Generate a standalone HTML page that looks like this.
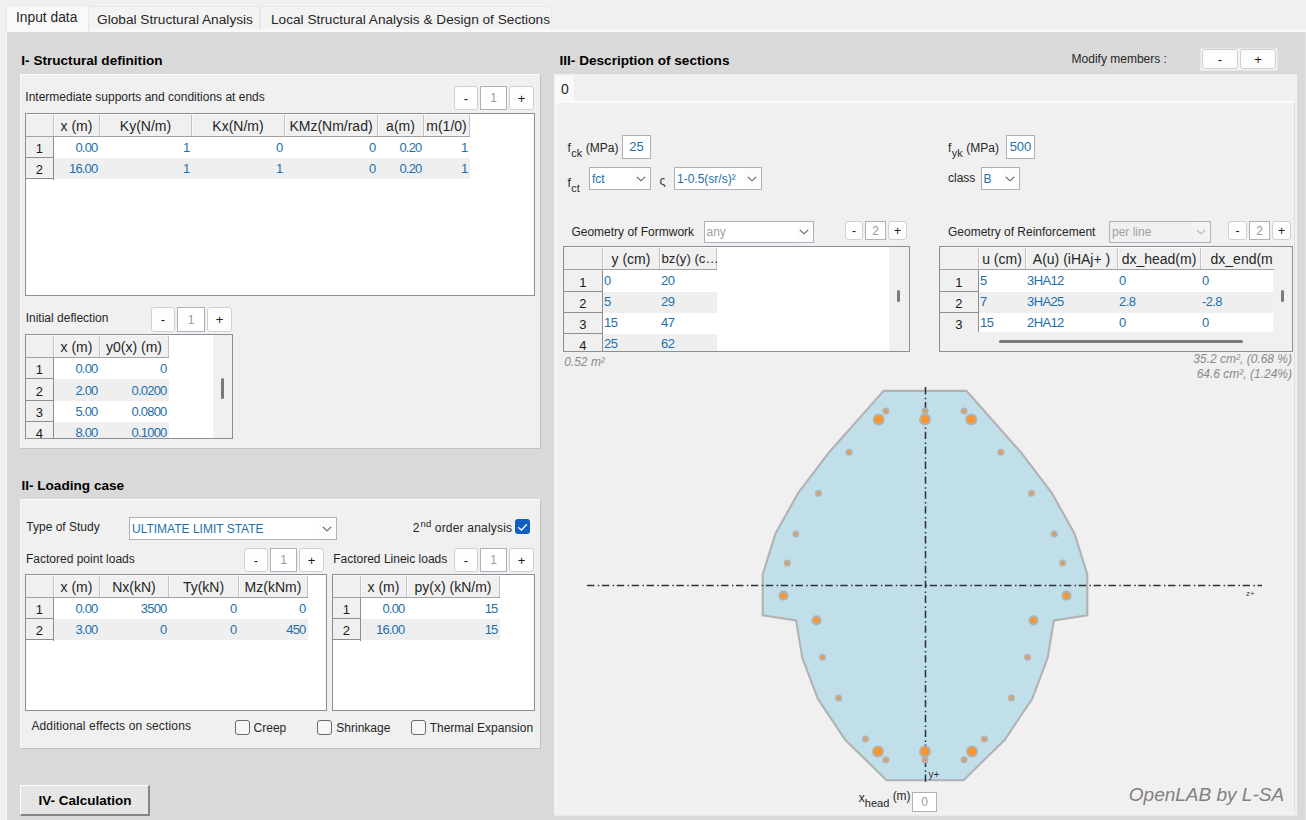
<!DOCTYPE html>
<html><head><meta charset="utf-8"><style>
html,body{margin:0;padding:0;}
body{width:1306px;height:820px;position:relative;overflow:hidden;background:#f0f0f0;font-family:"Liberation Sans",sans-serif;}
.a{position:absolute;}
.t{position:absolute;white-space:nowrap;}
svg{overflow:visible;}
</style></head><body>

<div class="a" style="left:88px;top:6px;width:172px;height:23px;background:#f3f3f3;border:1px solid #e8e8e8;border-bottom:none;box-sizing:border-box;"></div>
<div class="a" style="left:260px;top:6px;width:292px;height:23px;background:#f3f3f3;border:1px solid #e8e8e8;border-bottom:none;box-sizing:border-box;"></div>
<div class="a" style="left:6px;top:29px;width:1300px;height:3px;background:#f9f9f9;"></div>
<div class="a" style="left:6px;top:28px;width:2px;height:792px;background:#f9f9f9;"></div>
<div class="a" style="left:6px;top:5px;width:83px;height:27px;background:#f9f9f9;border:1px solid #e8e8e8;border-bottom:none;box-sizing:border-box;"></div>
<div class="t" style="left:16.00px;top:11.22px;font-size:13.8px;line-height:13.8px;color:#262626;">Input data</div>
<div class="t" style="left:97.00px;top:12.80px;font-size:13.7px;line-height:13.7px;color:#262626;">Global Structural Analysis</div>
<div class="t" style="left:271.00px;top:12.85px;font-size:13.65px;line-height:13.65px;color:#262626;">Local Structural Analysis &amp; Design of Sections</div>
<div class="a" style="left:7px;top:32px;width:1299px;height:788px;background:#d9d9d9;"></div>
<div class="a" style="left:1305px;top:32px;width:1px;height:788px;background:#e4e4e4;"></div>
<div class="t" style="left:21.30px;top:54.09px;font-size:13.6px;line-height:13.6px;color:#000;font-weight:bold;">I- Structural definition</div>
<div class="a" style="left:20px;top:74px;width:521px;height:375px;background:#f0f0f0;border-top:1px solid #fbfbfb;border-left:1px solid #fbfbfb;border-right:1px solid #c2c2c2;border-bottom:1px solid #c2c2c2;box-sizing:border-box;"></div>
<div class="t" style="left:25.30px;top:90.84px;font-size:12px;line-height:12px;color:#262626;">Intermediate supports and conditions at ends</div>
<div class="a" style="left:454px;top:86px;width:24px;height:24px;background:#fdfdfd;border:1px solid #d0d0d0;border-radius:3px;box-sizing:border-box;"></div>
<div class="t" style="left:266.00px;width:400px;text-align:center;top:91.50px;font-size:13px;line-height:13px;color:#1a1a1a;">-</div>
<div class="a" style="left:480px;top:86px;width:27px;height:24px;background:#ffffff;border:1px solid #b0b0b8;box-sizing:border-box;"></div>
<div class="t" style="left:293.50px;width:400px;text-align:center;top:92.14px;font-size:12px;line-height:12px;color:#9a9a9a;">1</div>
<div class="a" style="left:509px;top:86px;width:25px;height:24px;background:#fdfdfd;border:1px solid #d0d0d0;border-radius:3px;box-sizing:border-box;"></div>
<div class="t" style="left:321.50px;width:400px;text-align:center;top:91.50px;font-size:13px;line-height:13px;color:#1a1a1a;">+</div>
<div class="a" style="left:25px;top:113px;width:510px;height:183px;background:#ffffff;overflow:hidden;">
<div class="a" style="left:0px;top:0px;width:29px;height:23px;background:#f0f0f0;"></div>
<div class="a" style="left:29px;top:0px;width:46px;height:23px;background:#f0f0f0;"></div>
<div class="a" style="left:29px;top:1px;width:1px;height:22px;background:#fafafa;"></div>
<div class="a" style="left:74px;top:0px;width:1px;height:23px;background:#c2c2c2;"></div>
<div class="a" style="left:75px;top:0px;width:92px;height:23px;background:#f0f0f0;"></div>
<div class="a" style="left:75px;top:1px;width:1px;height:22px;background:#fafafa;"></div>
<div class="a" style="left:166px;top:0px;width:1px;height:23px;background:#c2c2c2;"></div>
<div class="a" style="left:167px;top:0px;width:93px;height:23px;background:#f0f0f0;"></div>
<div class="a" style="left:167px;top:1px;width:1px;height:22px;background:#fafafa;"></div>
<div class="a" style="left:259px;top:0px;width:1px;height:23px;background:#c2c2c2;"></div>
<div class="a" style="left:260px;top:0px;width:93px;height:23px;background:#f0f0f0;"></div>
<div class="a" style="left:260px;top:1px;width:1px;height:22px;background:#fafafa;"></div>
<div class="a" style="left:352px;top:0px;width:1px;height:23px;background:#c2c2c2;"></div>
<div class="a" style="left:353px;top:0px;width:46px;height:23px;background:#f0f0f0;"></div>
<div class="a" style="left:353px;top:1px;width:1px;height:22px;background:#fafafa;"></div>
<div class="a" style="left:398px;top:0px;width:1px;height:23px;background:#c2c2c2;"></div>
<div class="a" style="left:399px;top:0px;width:46px;height:23px;background:#f0f0f0;"></div>
<div class="a" style="left:399px;top:1px;width:1px;height:22px;background:#fafafa;"></div>
<div class="a" style="left:444px;top:0px;width:1px;height:23px;background:#c2c2c2;"></div>
<div class="a" style="left:28px;top:0px;width:1px;height:23px;background:#c2c2c2;"></div>
<div class="a" style="left:0px;top:1px;width:445px;height:1px;background:#fafafa;"></div>
<div class="a" style="left:0px;top:23px;width:445px;height:1px;background:#a3a3a3;"></div>
<div class="t" style="left:-148.50px;width:400px;text-align:center;top:5.65px;font-size:14px;line-height:14px;color:#262626;">x (m)</div>
<div class="t" style="left:-79.50px;width:400px;text-align:center;top:5.65px;font-size:14px;line-height:14px;color:#262626;">Ky(N/m)</div>
<div class="t" style="left:13.00px;width:400px;text-align:center;top:5.65px;font-size:14px;line-height:14px;color:#262626;">Kx(N/m)</div>
<div class="t" style="left:106.00px;width:400px;text-align:center;top:5.65px;font-size:14px;line-height:14px;color:#262626;">KMz(Nm/rad)</div>
<div class="t" style="left:175.50px;width:400px;text-align:center;top:5.65px;font-size:14px;line-height:14px;color:#262626;">a(m)</div>
<div class="t" style="left:221.50px;width:400px;text-align:center;top:5.65px;font-size:14px;line-height:14px;color:#262626;">m(1/0)</div>
<div class="a" style="left:29px;top:24px;width:416px;height:21px;background:#ffffff;"></div>
<div class="a" style="left:0px;top:24px;width:28px;height:21px;background:#f0f0f0;"></div>
<div class="a" style="left:28px;top:24px;width:1px;height:22px;background:#8e8e8e;"></div>
<div class="a" style="left:0px;top:44px;width:29px;height:1px;background:#8e8e8e;"></div>
<div class="t" style="left:-185.70px;width:400px;text-align:center;top:29.40px;font-size:13px;line-height:13px;color:#1a1a1a;">1</div>
<div class="t" style="left:-327.50px;width:400px;text-align:right;top:27.70px;font-size:13px;line-height:13px;color:#1d6fab;letter-spacing:-0.8px;">0.00</div>
<div class="t" style="left:-235.50px;width:400px;text-align:right;top:27.70px;font-size:13px;line-height:13px;color:#1d6fab;letter-spacing:-0.8px;">1</div>
<div class="t" style="left:-142.50px;width:400px;text-align:right;top:27.70px;font-size:13px;line-height:13px;color:#1d6fab;letter-spacing:-0.8px;">0</div>
<div class="t" style="left:-49.50px;width:400px;text-align:right;top:27.70px;font-size:13px;line-height:13px;color:#1d6fab;letter-spacing:-0.8px;">0</div>
<div class="t" style="left:-3.50px;width:400px;text-align:right;top:27.70px;font-size:13px;line-height:13px;color:#1d6fab;letter-spacing:-0.8px;">0.20</div>
<div class="t" style="left:42.50px;width:400px;text-align:right;top:27.70px;font-size:13px;line-height:13px;color:#1d6fab;letter-spacing:-0.8px;">1</div>
<div class="a" style="left:29px;top:45px;width:416px;height:21px;background:#efefef;"></div>
<div class="a" style="left:0px;top:45px;width:28px;height:21px;background:#f0f0f0;"></div>
<div class="a" style="left:28px;top:45px;width:1px;height:22px;background:#8e8e8e;"></div>
<div class="a" style="left:0px;top:65px;width:29px;height:1px;background:#8e8e8e;"></div>
<div class="t" style="left:-185.70px;width:400px;text-align:center;top:50.40px;font-size:13px;line-height:13px;color:#1a1a1a;">2</div>
<div class="t" style="left:-327.50px;width:400px;text-align:right;top:48.70px;font-size:13px;line-height:13px;color:#1d6fab;letter-spacing:-0.8px;">16.00</div>
<div class="t" style="left:-235.50px;width:400px;text-align:right;top:48.70px;font-size:13px;line-height:13px;color:#1d6fab;letter-spacing:-0.8px;">1</div>
<div class="t" style="left:-142.50px;width:400px;text-align:right;top:48.70px;font-size:13px;line-height:13px;color:#1d6fab;letter-spacing:-0.8px;">1</div>
<div class="t" style="left:-49.50px;width:400px;text-align:right;top:48.70px;font-size:13px;line-height:13px;color:#1d6fab;letter-spacing:-0.8px;">0</div>
<div class="t" style="left:-3.50px;width:400px;text-align:right;top:48.70px;font-size:13px;line-height:13px;color:#1d6fab;letter-spacing:-0.8px;">0.20</div>
<div class="t" style="left:42.50px;width:400px;text-align:right;top:48.70px;font-size:13px;line-height:13px;color:#1d6fab;letter-spacing:-0.8px;">1</div>
</div>
<div class="a" style="left:25px;top:113px;width:510px;height:183px;border:1px solid #8a9099;box-sizing:border-box;"></div>
<div class="t" style="left:25.70px;top:311.54px;font-size:12px;line-height:12px;color:#262626;">Initial deflection</div>
<div class="a" style="left:151px;top:307px;width:24px;height:25px;background:#fdfdfd;border:1px solid #d0d0d0;border-radius:3px;box-sizing:border-box;"></div>
<div class="t" style="left:-37.00px;width:400px;text-align:center;top:313.00px;font-size:13px;line-height:13px;color:#1a1a1a;">-</div>
<div class="a" style="left:177px;top:307px;width:28px;height:25px;background:#ffffff;border:1px solid #b0b0b8;box-sizing:border-box;"></div>
<div class="t" style="left:-9.00px;width:400px;text-align:center;top:313.64px;font-size:12px;line-height:12px;color:#9a9a9a;">1</div>
<div class="a" style="left:207px;top:307px;width:25px;height:25px;background:#fdfdfd;border:1px solid #d0d0d0;border-radius:3px;box-sizing:border-box;"></div>
<div class="t" style="left:19.50px;width:400px;text-align:center;top:313.00px;font-size:13px;line-height:13px;color:#1a1a1a;">+</div>
<div class="a" style="left:25px;top:334px;width:208px;height:105px;background:#ffffff;overflow:hidden;">
<div class="a" style="left:188px;top:0px;width:19px;height:105px;background:#f0f0f0;"></div>
<div class="a" style="left:0px;top:0px;width:29px;height:23px;background:#f0f0f0;"></div>
<div class="a" style="left:29px;top:0px;width:46px;height:23px;background:#f0f0f0;"></div>
<div class="a" style="left:29px;top:1px;width:1px;height:22px;background:#fafafa;"></div>
<div class="a" style="left:74px;top:0px;width:1px;height:23px;background:#c2c2c2;"></div>
<div class="a" style="left:75px;top:0px;width:69px;height:23px;background:#f0f0f0;"></div>
<div class="a" style="left:75px;top:1px;width:1px;height:22px;background:#fafafa;"></div>
<div class="a" style="left:143px;top:0px;width:1px;height:23px;background:#c2c2c2;"></div>
<div class="a" style="left:28px;top:0px;width:1px;height:23px;background:#c2c2c2;"></div>
<div class="a" style="left:0px;top:1px;width:144px;height:1px;background:#fafafa;"></div>
<div class="a" style="left:0px;top:23px;width:144px;height:1px;background:#a3a3a3;"></div>
<div class="t" style="left:-148.50px;width:400px;text-align:center;top:5.65px;font-size:14px;line-height:14px;color:#262626;">x (m)</div>
<div class="t" style="left:-91.00px;width:400px;text-align:center;top:5.65px;font-size:14px;line-height:14px;color:#262626;">y0(x) (m)</div>
<div class="a" style="left:29px;top:24px;width:115px;height:21px;background:#ffffff;"></div>
<div class="a" style="left:0px;top:24px;width:28px;height:21px;background:#f0f0f0;"></div>
<div class="a" style="left:28px;top:24px;width:1px;height:22px;background:#8e8e8e;"></div>
<div class="a" style="left:0px;top:44px;width:29px;height:1px;background:#8e8e8e;"></div>
<div class="t" style="left:-185.70px;width:400px;text-align:center;top:29.40px;font-size:13px;line-height:13px;color:#1a1a1a;">1</div>
<div class="t" style="left:-327.50px;width:400px;text-align:right;top:27.70px;font-size:13px;line-height:13px;color:#1d6fab;letter-spacing:-0.8px;">0.00</div>
<div class="t" style="left:-258.50px;width:400px;text-align:right;top:27.70px;font-size:13px;line-height:13px;color:#1d6fab;letter-spacing:-0.8px;">0</div>
<div class="a" style="left:29px;top:45px;width:115px;height:22px;background:#efefef;"></div>
<div class="a" style="left:0px;top:45px;width:28px;height:22px;background:#f0f0f0;"></div>
<div class="a" style="left:28px;top:45px;width:1px;height:23px;background:#8e8e8e;"></div>
<div class="a" style="left:0px;top:66px;width:29px;height:1px;background:#8e8e8e;"></div>
<div class="t" style="left:-185.70px;width:400px;text-align:center;top:51.40px;font-size:13px;line-height:13px;color:#1a1a1a;">2</div>
<div class="t" style="left:-327.50px;width:400px;text-align:right;top:49.70px;font-size:13px;line-height:13px;color:#1d6fab;letter-spacing:-0.8px;">2.00</div>
<div class="t" style="left:-258.50px;width:400px;text-align:right;top:49.70px;font-size:13px;line-height:13px;color:#1d6fab;letter-spacing:-0.8px;">0.0200</div>
<div class="a" style="left:29px;top:67px;width:115px;height:21px;background:#ffffff;"></div>
<div class="a" style="left:0px;top:67px;width:28px;height:21px;background:#f0f0f0;"></div>
<div class="a" style="left:28px;top:67px;width:1px;height:22px;background:#8e8e8e;"></div>
<div class="a" style="left:0px;top:87px;width:29px;height:1px;background:#8e8e8e;"></div>
<div class="t" style="left:-185.70px;width:400px;text-align:center;top:72.40px;font-size:13px;line-height:13px;color:#1a1a1a;">3</div>
<div class="t" style="left:-327.50px;width:400px;text-align:right;top:70.70px;font-size:13px;line-height:13px;color:#1d6fab;letter-spacing:-0.8px;">5.00</div>
<div class="t" style="left:-258.50px;width:400px;text-align:right;top:70.70px;font-size:13px;line-height:13px;color:#1d6fab;letter-spacing:-0.8px;">0.0800</div>
<div class="a" style="left:29px;top:88px;width:115px;height:21px;background:#efefef;"></div>
<div class="a" style="left:0px;top:88px;width:28px;height:21px;background:#f0f0f0;"></div>
<div class="a" style="left:28px;top:88px;width:1px;height:22px;background:#8e8e8e;"></div>
<div class="a" style="left:0px;top:108px;width:29px;height:1px;background:#8e8e8e;"></div>
<div class="t" style="left:-185.70px;width:400px;text-align:center;top:93.40px;font-size:13px;line-height:13px;color:#1a1a1a;">4</div>
<div class="t" style="left:-327.50px;width:400px;text-align:right;top:91.70px;font-size:13px;line-height:13px;color:#1d6fab;letter-spacing:-0.8px;">8.00</div>
<div class="t" style="left:-258.50px;width:400px;text-align:right;top:91.70px;font-size:13px;line-height:13px;color:#1d6fab;letter-spacing:-0.8px;">0.1000</div>
<div class="a" style="left:196px;top:44px;width:3px;height:21px;background:#7a7a7a;border-radius:1.5px;"></div>
</div>
<div class="a" style="left:25px;top:334px;width:208px;height:105px;border:1px solid #8a9099;box-sizing:border-box;"></div>
<div class="t" style="left:21.40px;top:478.69px;font-size:13.6px;line-height:13.6px;color:#000;font-weight:bold;">II- Loading case</div>
<div class="a" style="left:20px;top:499px;width:521px;height:250px;background:#f0f0f0;border-top:1px solid #fbfbfb;border-left:1px solid #fbfbfb;border-right:1px solid #c2c2c2;border-bottom:1px solid #c2c2c2;box-sizing:border-box;"></div>
<div class="t" style="left:26.30px;top:520.64px;font-size:12px;line-height:12px;color:#262626;">Type of Study</div>
<div class="a" style="left:129px;top:517px;width:208px;height:23px;background:#ffffff;border:1px solid #b0b0b8;box-sizing:border-box;"></div>
<div class="a" style="left:319px;top:518px;width:17px;height:21px;background:#fcfcfc;"></div>
<div class="t" style="left:132.00px;top:522.64px;font-size:12px;line-height:12px;color:#1d6fab;">ULTIMATE LIMIT STATE</div>
<svg class="a" style="left:322px;top:526.0px" width="10" height="6" viewBox="0 0 10 6"><path d="M0.8 0.8 L5 4.8 L9.2 0.8" fill="none" stroke="#606060" stroke-width="1.1"/></svg>
<div class="t" style="left:412.80px;top:522.44px;font-size:12px;line-height:12px;color:#262626;">2<sup style="font-size:9.5px;vertical-align:5.5px;line-height:0;margin-left:1px;letter-spacing:0.2px">nd</sup> <span style="letter-spacing:0.2px">order analysis</span></div>
<div class="a" style="left:515px;top:519px;width:15px;height:15px;background:#0f5fc5;border-radius:3px;"></div>
<svg class="a" style="left:515px;top:519px" width="15" height="15" viewBox="0 0 14 14"><path d="M2.9 7.7 L6.0 10.3 L11.1 4.9" fill="none" stroke="#ffffff" stroke-width="1.15"/></svg>
<div class="t" style="left:26.00px;top:553.14px;font-size:12px;line-height:12px;color:#262626;">Factored point loads</div>
<div class="a" style="left:244px;top:548px;width:24px;height:24px;background:#fdfdfd;border:1px solid #d0d0d0;border-radius:3px;box-sizing:border-box;"></div>
<div class="t" style="left:56.00px;width:400px;text-align:center;top:553.50px;font-size:13px;line-height:13px;color:#1a1a1a;">-</div>
<div class="a" style="left:270px;top:548px;width:27px;height:24px;background:#ffffff;border:1px solid #b0b0b8;box-sizing:border-box;"></div>
<div class="t" style="left:83.50px;width:400px;text-align:center;top:554.14px;font-size:12px;line-height:12px;color:#9a9a9a;">1</div>
<div class="a" style="left:299px;top:548px;width:25px;height:24px;background:#fdfdfd;border:1px solid #d0d0d0;border-radius:3px;box-sizing:border-box;"></div>
<div class="t" style="left:111.50px;width:400px;text-align:center;top:553.50px;font-size:13px;line-height:13px;color:#1a1a1a;">+</div>
<div class="t" style="left:333.20px;top:553.14px;font-size:12px;line-height:12px;color:#262626;">Factored Lineic loads</div>
<div class="a" style="left:454px;top:548px;width:24px;height:24px;background:#fdfdfd;border:1px solid #d0d0d0;border-radius:3px;box-sizing:border-box;"></div>
<div class="t" style="left:266.00px;width:400px;text-align:center;top:553.50px;font-size:13px;line-height:13px;color:#1a1a1a;">-</div>
<div class="a" style="left:480px;top:548px;width:27px;height:24px;background:#ffffff;border:1px solid #b0b0b8;box-sizing:border-box;"></div>
<div class="t" style="left:293.50px;width:400px;text-align:center;top:554.14px;font-size:12px;line-height:12px;color:#9a9a9a;">1</div>
<div class="a" style="left:509px;top:548px;width:25px;height:24px;background:#fdfdfd;border:1px solid #d0d0d0;border-radius:3px;box-sizing:border-box;"></div>
<div class="t" style="left:321.50px;width:400px;text-align:center;top:553.50px;font-size:13px;line-height:13px;color:#1a1a1a;">+</div>
<div class="a" style="left:25px;top:574px;width:302px;height:137px;background:#ffffff;overflow:hidden;">
<div class="a" style="left:0px;top:0px;width:29px;height:23px;background:#f0f0f0;"></div>
<div class="a" style="left:29px;top:0px;width:46px;height:23px;background:#f0f0f0;"></div>
<div class="a" style="left:29px;top:1px;width:1px;height:22px;background:#fafafa;"></div>
<div class="a" style="left:74px;top:0px;width:1px;height:23px;background:#c2c2c2;"></div>
<div class="a" style="left:75px;top:0px;width:69px;height:23px;background:#f0f0f0;"></div>
<div class="a" style="left:75px;top:1px;width:1px;height:22px;background:#fafafa;"></div>
<div class="a" style="left:143px;top:0px;width:1px;height:23px;background:#c2c2c2;"></div>
<div class="a" style="left:144px;top:0px;width:70px;height:23px;background:#f0f0f0;"></div>
<div class="a" style="left:144px;top:1px;width:1px;height:22px;background:#fafafa;"></div>
<div class="a" style="left:213px;top:0px;width:1px;height:23px;background:#c2c2c2;"></div>
<div class="a" style="left:214px;top:0px;width:69px;height:23px;background:#f0f0f0;"></div>
<div class="a" style="left:214px;top:1px;width:1px;height:22px;background:#fafafa;"></div>
<div class="a" style="left:282px;top:0px;width:1px;height:23px;background:#c2c2c2;"></div>
<div class="a" style="left:28px;top:0px;width:1px;height:23px;background:#c2c2c2;"></div>
<div class="a" style="left:0px;top:1px;width:283px;height:1px;background:#fafafa;"></div>
<div class="a" style="left:0px;top:23px;width:283px;height:1px;background:#a3a3a3;"></div>
<div class="t" style="left:-148.50px;width:400px;text-align:center;top:5.65px;font-size:14px;line-height:14px;color:#262626;">x (m)</div>
<div class="t" style="left:-91.00px;width:400px;text-align:center;top:5.65px;font-size:14px;line-height:14px;color:#262626;">Nx(kN)</div>
<div class="t" style="left:-21.50px;width:400px;text-align:center;top:5.65px;font-size:14px;line-height:14px;color:#262626;">Ty(kN)</div>
<div class="t" style="left:48.00px;width:400px;text-align:center;top:5.65px;font-size:14px;line-height:14px;color:#262626;">Mz(kNm)</div>
<div class="a" style="left:29px;top:24px;width:254px;height:21px;background:#ffffff;"></div>
<div class="a" style="left:0px;top:24px;width:28px;height:21px;background:#f0f0f0;"></div>
<div class="a" style="left:28px;top:24px;width:1px;height:22px;background:#8e8e8e;"></div>
<div class="a" style="left:0px;top:44px;width:29px;height:1px;background:#8e8e8e;"></div>
<div class="t" style="left:-185.70px;width:400px;text-align:center;top:29.40px;font-size:13px;line-height:13px;color:#1a1a1a;">1</div>
<div class="t" style="left:-327.50px;width:400px;text-align:right;top:27.70px;font-size:13px;line-height:13px;color:#1d6fab;letter-spacing:-0.8px;">0.00</div>
<div class="t" style="left:-258.50px;width:400px;text-align:right;top:27.70px;font-size:13px;line-height:13px;color:#1d6fab;letter-spacing:-0.8px;">3500</div>
<div class="t" style="left:-188.50px;width:400px;text-align:right;top:27.70px;font-size:13px;line-height:13px;color:#1d6fab;letter-spacing:-0.8px;">0</div>
<div class="t" style="left:-119.50px;width:400px;text-align:right;top:27.70px;font-size:13px;line-height:13px;color:#1d6fab;letter-spacing:-0.8px;">0</div>
<div class="a" style="left:29px;top:45px;width:254px;height:21px;background:#efefef;"></div>
<div class="a" style="left:0px;top:45px;width:28px;height:21px;background:#f0f0f0;"></div>
<div class="a" style="left:28px;top:45px;width:1px;height:22px;background:#8e8e8e;"></div>
<div class="a" style="left:0px;top:65px;width:29px;height:1px;background:#8e8e8e;"></div>
<div class="t" style="left:-185.70px;width:400px;text-align:center;top:50.40px;font-size:13px;line-height:13px;color:#1a1a1a;">2</div>
<div class="t" style="left:-327.50px;width:400px;text-align:right;top:48.70px;font-size:13px;line-height:13px;color:#1d6fab;letter-spacing:-0.8px;">3.00</div>
<div class="t" style="left:-258.50px;width:400px;text-align:right;top:48.70px;font-size:13px;line-height:13px;color:#1d6fab;letter-spacing:-0.8px;">0</div>
<div class="t" style="left:-188.50px;width:400px;text-align:right;top:48.70px;font-size:13px;line-height:13px;color:#1d6fab;letter-spacing:-0.8px;">0</div>
<div class="t" style="left:-119.50px;width:400px;text-align:right;top:48.70px;font-size:13px;line-height:13px;color:#1d6fab;letter-spacing:-0.8px;">450</div>
</div>
<div class="a" style="left:25px;top:574px;width:302px;height:137px;border:1px solid #8a9099;box-sizing:border-box;"></div>
<div class="a" style="left:332px;top:574px;width:203px;height:137px;background:#ffffff;overflow:hidden;">
<div class="a" style="left:0px;top:0px;width:29px;height:23px;background:#f0f0f0;"></div>
<div class="a" style="left:29px;top:0px;width:46px;height:23px;background:#f0f0f0;"></div>
<div class="a" style="left:29px;top:1px;width:1px;height:22px;background:#fafafa;"></div>
<div class="a" style="left:74px;top:0px;width:1px;height:23px;background:#c2c2c2;"></div>
<div class="a" style="left:75px;top:0px;width:93px;height:23px;background:#f0f0f0;"></div>
<div class="a" style="left:75px;top:1px;width:1px;height:22px;background:#fafafa;"></div>
<div class="a" style="left:167px;top:0px;width:1px;height:23px;background:#c2c2c2;"></div>
<div class="a" style="left:28px;top:0px;width:1px;height:23px;background:#c2c2c2;"></div>
<div class="a" style="left:0px;top:1px;width:168px;height:1px;background:#fafafa;"></div>
<div class="a" style="left:0px;top:23px;width:168px;height:1px;background:#a3a3a3;"></div>
<div class="t" style="left:-148.50px;width:400px;text-align:center;top:5.65px;font-size:14px;line-height:14px;color:#262626;">x (m)</div>
<div class="t" style="left:-79.00px;width:400px;text-align:center;top:5.65px;font-size:14px;line-height:14px;color:#262626;">py(x) (kN/m)</div>
<div class="a" style="left:29px;top:24px;width:139px;height:21px;background:#ffffff;"></div>
<div class="a" style="left:0px;top:24px;width:28px;height:21px;background:#f0f0f0;"></div>
<div class="a" style="left:28px;top:24px;width:1px;height:22px;background:#8e8e8e;"></div>
<div class="a" style="left:0px;top:44px;width:29px;height:1px;background:#8e8e8e;"></div>
<div class="t" style="left:-185.70px;width:400px;text-align:center;top:29.40px;font-size:13px;line-height:13px;color:#1a1a1a;">1</div>
<div class="t" style="left:-327.50px;width:400px;text-align:right;top:27.70px;font-size:13px;line-height:13px;color:#1d6fab;letter-spacing:-0.8px;">0.00</div>
<div class="t" style="left:-234.50px;width:400px;text-align:right;top:27.70px;font-size:13px;line-height:13px;color:#1d6fab;letter-spacing:-0.8px;">15</div>
<div class="a" style="left:29px;top:45px;width:139px;height:21px;background:#efefef;"></div>
<div class="a" style="left:0px;top:45px;width:28px;height:21px;background:#f0f0f0;"></div>
<div class="a" style="left:28px;top:45px;width:1px;height:22px;background:#8e8e8e;"></div>
<div class="a" style="left:0px;top:65px;width:29px;height:1px;background:#8e8e8e;"></div>
<div class="t" style="left:-185.70px;width:400px;text-align:center;top:50.40px;font-size:13px;line-height:13px;color:#1a1a1a;">2</div>
<div class="t" style="left:-327.50px;width:400px;text-align:right;top:48.70px;font-size:13px;line-height:13px;color:#1d6fab;letter-spacing:-0.8px;">16.00</div>
<div class="t" style="left:-234.50px;width:400px;text-align:right;top:48.70px;font-size:13px;line-height:13px;color:#1d6fab;letter-spacing:-0.8px;">15</div>
</div>
<div class="a" style="left:332px;top:574px;width:203px;height:137px;border:1px solid #8a9099;box-sizing:border-box;"></div>
<div class="t" style="left:31.40px;top:719.84px;font-size:12px;line-height:12px;color:#262626;letter-spacing:0.15px;">Additional effects on sections</div>
<div class="a" style="left:235px;top:720px;width:15px;height:15px;background:#f7f7f7;border:1px solid #6a6a6a;border-radius:3px;box-sizing:border-box;"></div>
<div class="t" style="left:253.60px;top:721.84px;font-size:12px;line-height:12px;color:#262626;">Creep</div>
<div class="a" style="left:317px;top:720px;width:15px;height:15px;background:#f7f7f7;border:1px solid #6a6a6a;border-radius:3px;box-sizing:border-box;"></div>
<div class="t" style="left:336.30px;top:721.84px;font-size:12px;line-height:12px;color:#262626;">Shrinkage</div>
<div class="a" style="left:411px;top:720px;width:15px;height:15px;background:#f7f7f7;border:1px solid #6a6a6a;border-radius:3px;box-sizing:border-box;"></div>
<div class="t" style="left:429.70px;top:721.84px;font-size:12px;line-height:12px;color:#262626;">Thermal Expansion</div>
<div class="a" style="left:20px;top:785px;width:130px;height:31px;background:#e5e5e5;border-top:1px solid #fbfbfb;border-left:1px solid #fbfbfb;border-right:2px solid #858585;border-bottom:2px solid #858585;box-sizing:border-box;"></div>
<div class="t" style="left:-115.00px;width:400px;text-align:center;top:793.57px;font-size:13.5px;line-height:13.5px;color:#000;font-weight:bold;">IV- Calculation</div>
<div class="t" style="left:559.50px;top:54.09px;font-size:13.6px;line-height:13.6px;color:#000;font-weight:bold;">III- Description of sections</div>
<div class="t" style="left:1071.60px;top:53.44px;font-size:12px;line-height:12px;color:#262626;">Modify members :</div>
<div class="a" style="left:1200px;top:48px;width:78px;height:23px;background:#f3f3f3;border:1px solid #e6e6e6;box-sizing:border-box;"></div>
<div class="a" style="left:1202px;top:49px;width:36px;height:20px;background:#fdfdfd;border:1px solid #d0d0d0;border-radius:3px;box-sizing:border-box;"></div>
<div class="t" style="left:1020.00px;width:400px;text-align:center;top:52.50px;font-size:13px;line-height:13px;color:#1a1a1a;">-</div>
<div class="a" style="left:1240px;top:49px;width:36px;height:20px;background:#fdfdfd;border:1px solid #d0d0d0;border-radius:3px;box-sizing:border-box;"></div>
<div class="t" style="left:1058.00px;width:400px;text-align:center;top:52.50px;font-size:13px;line-height:13px;color:#1a1a1a;">+</div>
<div class="a" style="left:554px;top:74px;width:743px;height:742px;background:#f0f0f0;border-bottom:2px solid #ebebeb;box-sizing:border-box;"></div>
<div class="a" style="left:555px;top:76px;width:19px;height:27px;background:#f9f9f9;"></div>
<div class="t" style="left:561.00px;top:81.55px;font-size:14px;line-height:14px;color:#262626;">0</div>
<div class="a" style="left:556px;top:101px;width:739px;height:713px;background:#f0f0f0;border-top:2px solid #fafafa;border-left:1px solid #f6f6f6;border-right:1px solid #e0e0e0;border-bottom:1px solid #f6f6f6;box-sizing:border-box;"></div>
<div class="t" style="left:567.50px;top:141.64px;font-size:12px;line-height:12px;color:#262626;">f<span style="font-size:10.8px;position:relative;top:5.2px;margin-left:0.5px">ck</span><span style="margin-left:0.3px"> (MPa)</span></div>
<div class="a" style="left:622px;top:135px;width:29px;height:24px;background:#ffffff;border:1px solid #b0b0b8;box-sizing:border-box;"></div>
<div class="t" style="left:436.50px;width:400px;text-align:center;top:140.30px;font-size:13px;line-height:13px;color:#1d6fab;">25</div>
<div class="t" style="left:567.50px;top:176.54px;font-size:12px;line-height:12px;color:#262626;">f<span style="font-size:10.8px;position:relative;top:5.2px;margin-left:0.5px">ct</span></div>
<div class="a" style="left:589px;top:167px;width:62px;height:23px;background:#ffffff;border:1px solid #b0b0b8;box-sizing:border-box;"></div>
<div class="a" style="left:633px;top:168px;width:17px;height:21px;background:#fcfcfc;"></div>
<div class="t" style="left:592.00px;top:172.64px;font-size:12px;line-height:12px;color:#1d6fab;">fct</div>
<svg class="a" style="left:636px;top:176.0px" width="10" height="6" viewBox="0 0 10 6"><path d="M0.8 0.8 L5 4.8 L9.2 0.8" fill="none" stroke="#606060" stroke-width="1.1"/></svg>
<div class="t" style="left:659.50px;top:174.92px;font-size:12.5px;line-height:12.5px;color:#3a3a3a;">ς</div>
<div class="a" style="left:674px;top:167px;width:88px;height:23px;background:#ffffff;border:1px solid #b0b0b8;box-sizing:border-box;"></div>
<div class="a" style="left:744px;top:168px;width:17px;height:21px;background:#fcfcfc;"></div>
<div class="t" style="left:677.00px;top:172.64px;font-size:12px;line-height:12px;color:#1d6fab;">1-0.5(sr/s)²</div>
<svg class="a" style="left:747px;top:176.0px" width="10" height="6" viewBox="0 0 10 6"><path d="M0.8 0.8 L5 4.8 L9.2 0.8" fill="none" stroke="#606060" stroke-width="1.1"/></svg>
<div class="t" style="left:948.00px;top:141.74px;font-size:12px;line-height:12px;color:#262626;">f<span style="font-size:10.8px;position:relative;top:5.2px;margin-left:0.5px">yk</span><span style="margin-left:0.3px"> (MPa)</span></div>
<div class="a" style="left:1006px;top:135px;width:29px;height:24px;background:#ffffff;border:1px solid #b0b0b8;box-sizing:border-box;"></div>
<div class="t" style="left:820.50px;width:400px;text-align:center;top:140.30px;font-size:13px;line-height:13px;color:#1d6fab;">500</div>
<div class="t" style="left:948.00px;top:171.84px;font-size:12px;line-height:12px;color:#262626;">class</div>
<div class="a" style="left:980.5px;top:167px;width:39px;height:23px;background:#ffffff;border:1px solid #b0b0b8;box-sizing:border-box;"></div>
<div class="a" style="left:1001.5px;top:168px;width:17px;height:21px;background:#fcfcfc;"></div>
<div class="t" style="left:983.50px;top:172.64px;font-size:12px;line-height:12px;color:#1d6fab;">B</div>
<svg class="a" style="left:1004.5px;top:176.0px" width="10" height="6" viewBox="0 0 10 6"><path d="M0.8 0.8 L5 4.8 L9.2 0.8" fill="none" stroke="#606060" stroke-width="1.1"/></svg>
<div class="t" style="left:571.40px;top:225.54px;font-size:12px;line-height:12px;color:#262626;">Geometry of Formwork</div>
<div class="a" style="left:703.5px;top:220.5px;width:110px;height:22px;background:#ffffff;border:1px solid #b0b0b8;box-sizing:border-box;"></div>
<div class="a" style="left:795.5px;top:221.5px;width:17px;height:20px;background:#fcfcfc;"></div>
<div class="t" style="left:706.50px;top:225.64px;font-size:12px;line-height:12px;color:#a0a0a0;">any</div>
<svg class="a" style="left:798.5px;top:229.0px" width="10" height="6" viewBox="0 0 10 6"><path d="M0.8 0.8 L5 4.8 L9.2 0.8" fill="none" stroke="#606060" stroke-width="1.1"/></svg>
<div class="a" style="left:845px;top:221px;width:18px;height:19px;background:#fdfdfd;border:1px solid #d0d0d0;border-radius:3px;box-sizing:border-box;"></div>
<div class="t" style="left:654.00px;width:400px;text-align:center;top:224.84px;font-size:12px;line-height:12px;color:#1a1a1a;">-</div>
<div class="a" style="left:865px;top:221px;width:21px;height:19px;background:#ffffff;border:1px solid #b0b0b8;box-sizing:border-box;"></div>
<div class="t" style="left:675.50px;width:400px;text-align:center;top:224.64px;font-size:12px;line-height:12px;color:#9a9a9a;">2</div>
<div class="a" style="left:888px;top:221px;width:19px;height:19px;background:#fdfdfd;border:1px solid #d0d0d0;border-radius:3px;box-sizing:border-box;"></div>
<div class="t" style="left:697.50px;width:400px;text-align:center;top:224.84px;font-size:12px;line-height:12px;color:#1a1a1a;">+</div>
<div class="a" style="left:563px;top:246px;width:347px;height:106px;background:#ffffff;overflow:hidden;">
<div class="a" style="left:326px;top:0px;width:20px;height:106px;background:#f0f0f0;"></div>
<div class="a" style="left:0px;top:0px;width:40px;height:23px;background:#f0f0f0;"></div>
<div class="a" style="left:40px;top:0px;width:57px;height:23px;background:#f0f0f0;"></div>
<div class="a" style="left:40px;top:1px;width:1px;height:22px;background:#fafafa;"></div>
<div class="a" style="left:96px;top:0px;width:1px;height:23px;background:#c2c2c2;"></div>
<div class="a" style="left:97px;top:0px;width:57px;height:23px;background:#f0f0f0;"></div>
<div class="a" style="left:97px;top:1px;width:1px;height:22px;background:#fafafa;"></div>
<div class="a" style="left:153px;top:0px;width:1px;height:23px;background:#c2c2c2;"></div>
<div class="a" style="left:39px;top:0px;width:1px;height:23px;background:#c2c2c2;"></div>
<div class="a" style="left:0px;top:1px;width:154px;height:1px;background:#fafafa;"></div>
<div class="a" style="left:0px;top:23px;width:154px;height:1px;background:#a3a3a3;"></div>
<div class="t" style="left:-132.00px;width:400px;text-align:center;top:5.65px;font-size:14px;line-height:14px;color:#262626;">y (cm)</div>
<div class="t" style="left:98.50px;top:6.33px;font-size:13.2px;line-height:13.2px;color:#262626;">bz(y) (c…</div>
<div class="a" style="left:40px;top:24px;width:114px;height:22px;background:#ffffff;"></div>
<div class="a" style="left:0px;top:24px;width:39px;height:22px;background:#f0f0f0;"></div>
<div class="a" style="left:39px;top:24px;width:1px;height:23px;background:#8e8e8e;"></div>
<div class="a" style="left:0px;top:45px;width:40px;height:1px;background:#8e8e8e;"></div>
<div class="t" style="left:-180.20px;width:400px;text-align:center;top:30.40px;font-size:13px;line-height:13px;color:#1a1a1a;">1</div>
<div class="t" style="left:41.00px;top:28.00px;font-size:13px;line-height:13px;color:#1d6fab;letter-spacing:-0.6px;">0</div>
<div class="t" style="left:98.00px;top:28.00px;font-size:13px;line-height:13px;color:#1d6fab;letter-spacing:-0.6px;">20</div>
<div class="a" style="left:40px;top:46px;width:114px;height:21px;background:#efefef;"></div>
<div class="a" style="left:0px;top:46px;width:39px;height:21px;background:#f0f0f0;"></div>
<div class="a" style="left:39px;top:46px;width:1px;height:22px;background:#8e8e8e;"></div>
<div class="a" style="left:0px;top:66px;width:40px;height:1px;background:#8e8e8e;"></div>
<div class="t" style="left:-180.20px;width:400px;text-align:center;top:51.40px;font-size:13px;line-height:13px;color:#1a1a1a;">2</div>
<div class="t" style="left:41.00px;top:49.00px;font-size:13px;line-height:13px;color:#1d6fab;letter-spacing:-0.6px;">5</div>
<div class="t" style="left:98.00px;top:49.00px;font-size:13px;line-height:13px;color:#1d6fab;letter-spacing:-0.6px;">29</div>
<div class="a" style="left:40px;top:67px;width:114px;height:21px;background:#ffffff;"></div>
<div class="a" style="left:0px;top:67px;width:39px;height:21px;background:#f0f0f0;"></div>
<div class="a" style="left:39px;top:67px;width:1px;height:22px;background:#8e8e8e;"></div>
<div class="a" style="left:0px;top:87px;width:40px;height:1px;background:#8e8e8e;"></div>
<div class="t" style="left:-180.20px;width:400px;text-align:center;top:72.40px;font-size:13px;line-height:13px;color:#1a1a1a;">3</div>
<div class="t" style="left:41.00px;top:70.00px;font-size:13px;line-height:13px;color:#1d6fab;letter-spacing:-0.6px;">15</div>
<div class="t" style="left:98.00px;top:70.00px;font-size:13px;line-height:13px;color:#1d6fab;letter-spacing:-0.6px;">47</div>
<div class="a" style="left:40px;top:88px;width:114px;height:21px;background:#efefef;"></div>
<div class="a" style="left:0px;top:88px;width:39px;height:21px;background:#f0f0f0;"></div>
<div class="a" style="left:39px;top:88px;width:1px;height:22px;background:#8e8e8e;"></div>
<div class="a" style="left:0px;top:108px;width:40px;height:1px;background:#8e8e8e;"></div>
<div class="t" style="left:-180.20px;width:400px;text-align:center;top:93.40px;font-size:13px;line-height:13px;color:#1a1a1a;">4</div>
<div class="t" style="left:41.00px;top:91.00px;font-size:13px;line-height:13px;color:#1d6fab;letter-spacing:-0.6px;">25</div>
<div class="t" style="left:98.00px;top:91.00px;font-size:13px;line-height:13px;color:#1d6fab;letter-spacing:-0.6px;">62</div>
<div class="a" style="left:334px;top:44px;width:3px;height:12px;background:#7a7a7a;border-radius:1.5px;"></div>
</div>
<div class="a" style="left:563px;top:246px;width:347px;height:106px;border:1px solid #8a9099;box-sizing:border-box;"></div>
<div class="t" style="left:564.20px;top:355.64px;font-size:12px;line-height:12px;color:#8a8a8a;font-style:italic;">0.52 m²</div>
<div class="t" style="left:948.00px;top:225.74px;font-size:12px;line-height:12px;color:#262626;">Geometry of Reinforcement</div>
<div class="a" style="left:1109px;top:220.5px;width:102px;height:22px;background:#f0f0f0;border:1px solid #b0b0b8;box-sizing:border-box;"></div>
<div class="a" style="left:1193px;top:221.5px;width:17px;height:20px;background:#f3f3f3;"></div>
<div class="t" style="left:1112.00px;top:225.64px;font-size:12px;line-height:12px;color:#a0a0a0;">per line</div>
<svg class="a" style="left:1196px;top:229.0px" width="10" height="6" viewBox="0 0 10 6"><path d="M0.8 0.8 L5 4.8 L9.2 0.8" fill="none" stroke="#b0b0b0" stroke-width="1.1"/></svg>
<div class="a" style="left:1228px;top:221px;width:19px;height:19px;background:#fdfdfd;border:1px solid #d0d0d0;border-radius:3px;box-sizing:border-box;"></div>
<div class="t" style="left:1037.50px;width:400px;text-align:center;top:224.84px;font-size:12px;line-height:12px;color:#1a1a1a;">-</div>
<div class="a" style="left:1249px;top:221px;width:21px;height:19px;background:#ffffff;border:1px solid #b0b0b8;box-sizing:border-box;"></div>
<div class="t" style="left:1059.50px;width:400px;text-align:center;top:224.64px;font-size:12px;line-height:12px;color:#9a9a9a;">2</div>
<div class="a" style="left:1272px;top:221px;width:19px;height:19px;background:#fdfdfd;border:1px solid #d0d0d0;border-radius:3px;box-sizing:border-box;"></div>
<div class="t" style="left:1081.50px;width:400px;text-align:center;top:224.84px;font-size:12px;line-height:12px;color:#1a1a1a;">+</div>
<div class="a" style="left:939px;top:246px;width:354px;height:106px;background:#ffffff;overflow:hidden;">
<div class="a" style="left:334px;top:0px;width:19px;height:106px;background:#f0f0f0;"></div>
<div class="a" style="left:0px;top:0px;width:40px;height:23px;background:#f0f0f0;"></div>
<div class="a" style="left:40px;top:0px;width:47px;height:23px;background:#f0f0f0;"></div>
<div class="a" style="left:40px;top:1px;width:1px;height:22px;background:#fafafa;"></div>
<div class="a" style="left:86px;top:0px;width:1px;height:23px;background:#c2c2c2;"></div>
<div class="a" style="left:87px;top:0px;width:92px;height:23px;background:#f0f0f0;"></div>
<div class="a" style="left:87px;top:1px;width:1px;height:22px;background:#fafafa;"></div>
<div class="a" style="left:178px;top:0px;width:1px;height:23px;background:#c2c2c2;"></div>
<div class="a" style="left:179px;top:0px;width:83px;height:23px;background:#f0f0f0;"></div>
<div class="a" style="left:179px;top:1px;width:1px;height:22px;background:#fafafa;"></div>
<div class="a" style="left:261px;top:0px;width:1px;height:23px;background:#c2c2c2;"></div>
<div class="a" style="left:262px;top:0px;width:73px;height:23px;background:#f0f0f0;"></div>
<div class="a" style="left:262px;top:1px;width:1px;height:22px;background:#fafafa;"></div>
<div class="a" style="left:39px;top:0px;width:1px;height:23px;background:#c2c2c2;"></div>
<div class="a" style="left:0px;top:1px;width:335px;height:1px;background:#fafafa;"></div>
<div class="a" style="left:0px;top:23px;width:335px;height:1px;background:#a3a3a3;"></div>
<div class="a" style="left:0;top:0;width:334px;height:106px;overflow:hidden;">
<div class="t" style="left:-137.00px;width:400px;text-align:center;top:5.65px;font-size:14px;line-height:14px;color:#262626;">u (cm)</div>
<div class="t" style="left:-67.50px;width:400px;text-align:center;top:5.65px;font-size:14px;line-height:14px;color:#262626;">A(u) (iHAj+ )</div>
<div class="t" style="left:20.00px;width:400px;text-align:center;top:5.65px;font-size:14px;line-height:14px;color:#262626;">dx_head(m)</div>
<div class="t" style="left:105.00px;width:400px;text-align:center;top:5.65px;font-size:14px;line-height:14px;color:#262626;">dx_end(m)</div>
<div class="a" style="left:40px;top:24px;width:295px;height:22px;background:#ffffff;"></div>
<div class="a" style="left:0px;top:24px;width:39px;height:22px;background:#f0f0f0;"></div>
<div class="a" style="left:39px;top:24px;width:1px;height:23px;background:#8e8e8e;"></div>
<div class="a" style="left:0px;top:45px;width:40px;height:1px;background:#8e8e8e;"></div>
<div class="t" style="left:-180.20px;width:400px;text-align:center;top:30.40px;font-size:13px;line-height:13px;color:#1a1a1a;">1</div>
<div class="t" style="left:41.00px;top:27.80px;font-size:13px;line-height:13px;color:#1d6fab;letter-spacing:-0.6px;">5</div>
<div class="t" style="left:88.00px;top:27.80px;font-size:13px;line-height:13px;color:#1d6fab;letter-spacing:-0.6px;">3HA12</div>
<div class="t" style="left:180.00px;top:27.80px;font-size:13px;line-height:13px;color:#1d6fab;letter-spacing:-0.6px;">0</div>
<div class="t" style="left:263.00px;top:27.80px;font-size:13px;line-height:13px;color:#1d6fab;letter-spacing:-0.6px;">0</div>
<div class="a" style="left:40px;top:46px;width:295px;height:21px;background:#efefef;"></div>
<div class="a" style="left:0px;top:46px;width:39px;height:21px;background:#f0f0f0;"></div>
<div class="a" style="left:39px;top:46px;width:1px;height:22px;background:#8e8e8e;"></div>
<div class="a" style="left:0px;top:66px;width:40px;height:1px;background:#8e8e8e;"></div>
<div class="t" style="left:-180.20px;width:400px;text-align:center;top:51.40px;font-size:13px;line-height:13px;color:#1a1a1a;">2</div>
<div class="t" style="left:41.00px;top:48.80px;font-size:13px;line-height:13px;color:#1d6fab;letter-spacing:-0.6px;">7</div>
<div class="t" style="left:88.00px;top:48.80px;font-size:13px;line-height:13px;color:#1d6fab;letter-spacing:-0.6px;">3HA25</div>
<div class="t" style="left:180.00px;top:48.80px;font-size:13px;line-height:13px;color:#1d6fab;letter-spacing:-0.6px;">2.8</div>
<div class="t" style="left:263.00px;top:48.80px;font-size:13px;line-height:13px;color:#1d6fab;letter-spacing:-0.6px;">-2.8</div>
<div class="a" style="left:40px;top:67px;width:295px;height:21px;background:#ffffff;"></div>
<div class="a" style="left:0px;top:67px;width:39px;height:21px;background:#f0f0f0;"></div>
<div class="a" style="left:39px;top:67px;width:1px;height:22px;background:#8e8e8e;"></div>
<div class="a" style="left:0px;top:87px;width:40px;height:1px;background:#8e8e8e;"></div>
<div class="t" style="left:-180.20px;width:400px;text-align:center;top:72.40px;font-size:13px;line-height:13px;color:#1a1a1a;">3</div>
<div class="t" style="left:41.00px;top:69.80px;font-size:13px;line-height:13px;color:#1d6fab;letter-spacing:-0.6px;">15</div>
<div class="t" style="left:88.00px;top:69.80px;font-size:13px;line-height:13px;color:#1d6fab;letter-spacing:-0.6px;">2HA12</div>
<div class="t" style="left:180.00px;top:69.80px;font-size:13px;line-height:13px;color:#1d6fab;letter-spacing:-0.6px;">0</div>
<div class="t" style="left:263.00px;top:69.80px;font-size:13px;line-height:13px;color:#1d6fab;letter-spacing:-0.6px;">0</div>
</div>
<div class="a" style="left:0px;top:86px;width:354px;height:20px;background:#f0f0f0;"></div>
<div class="a" style="left:342px;top:44px;width:3px;height:12px;background:#7a7a7a;border-radius:1.5px;"></div>
<div class="a" style="left:60px;top:93.5px;width:244px;height:3px;background:#7a7a7a;border-radius:1.5px;"></div>
</div>
<div class="a" style="left:939px;top:246px;width:354px;height:106px;border:1px solid #8a9099;box-sizing:border-box;"></div>
<div class="t" style="left:892.00px;width:400px;text-align:right;top:353.04px;font-size:12px;line-height:12px;color:#8a8a8a;font-style:italic;">35.2 cm², (0.68 %)</div>
<div class="t" style="left:892.00px;width:400px;text-align:right;top:368.04px;font-size:12px;line-height:12px;color:#8a8a8a;font-style:italic;">64.6 cm², (1.24%)</div>
<svg class="a" style="left:0;top:0" width="1306" height="820" viewBox="0 0 1306 820">
<polygon points="883.6,390.9 829.2,452.2 798.1,493.2 775.4,533.7 762.7,574.5 762.7,615.3 796.1,620.4 802.3,657.8 817.9,698.9 845.4,740.0 886.5,780.2 963.5,780.2 1004.6,740.0 1032.1,698.9 1047.7,657.8 1053.9,620.4 1087.3,615.3 1087.3,574.5 1074.6,533.7 1051.9,493.2 1020.8,452.2 966.4,390.9" fill="#c1dfe8" stroke="#b2b2b2" stroke-width="2.1" stroke-linejoin="miter"/>
<line x1="587" y1="585.5" x2="1262" y2="585.5" stroke="#2c3235" stroke-width="1.55" stroke-dasharray="7.4,3.4,1.5,2.6"/>
<line x1="925.5" y1="387" x2="925.5" y2="784" stroke="#2c3235" stroke-width="1.55" stroke-dasharray="7.4,3.4,1.5,2.6"/>
<circle cx="878.7" cy="419.5" r="6.0" fill="#b2b2b2"/><circle cx="878.7" cy="419.5" r="4.1" fill="#f7952f"/>
<circle cx="925" cy="419.5" r="6.0" fill="#b2b2b2"/><circle cx="925" cy="419.5" r="4.1" fill="#f7952f"/>
<circle cx="971.3" cy="419.5" r="6.0" fill="#b2b2b2"/><circle cx="971.3" cy="419.5" r="4.1" fill="#f7952f"/>
<circle cx="878" cy="751.4" r="6.0" fill="#b2b2b2"/><circle cx="878" cy="751.4" r="4.1" fill="#f7952f"/>
<circle cx="925" cy="751.4" r="6.0" fill="#b2b2b2"/><circle cx="925" cy="751.4" r="4.1" fill="#f7952f"/>
<circle cx="972" cy="751.4" r="6.0" fill="#b2b2b2"/><circle cx="972" cy="751.4" r="4.1" fill="#f7952f"/>
<circle cx="783.5" cy="595.7" r="5.1" fill="#b2b2b2"/><circle cx="783.5" cy="595.7" r="3.0" fill="#f7952f"/>
<circle cx="1066.5" cy="595.7" r="5.1" fill="#b2b2b2"/><circle cx="1066.5" cy="595.7" r="3.0" fill="#f7952f"/>
<circle cx="816.5" cy="620.3" r="5.1" fill="#b2b2b2"/><circle cx="816.5" cy="620.3" r="3.0" fill="#f7952f"/>
<circle cx="1033.5" cy="620.3" r="5.1" fill="#b2b2b2"/><circle cx="1033.5" cy="620.3" r="3.0" fill="#f7952f"/>
<circle cx="885.9" cy="411.1" r="3.5" fill="#b2b2b2"/><circle cx="885.9" cy="411.1" r="1.5" fill="#f7952f"/>
<circle cx="925" cy="411.1" r="3.5" fill="#b2b2b2"/><circle cx="925" cy="411.1" r="1.5" fill="#f7952f"/>
<circle cx="964.1" cy="411.1" r="3.5" fill="#b2b2b2"/><circle cx="964.1" cy="411.1" r="1.5" fill="#f7952f"/>
<circle cx="849.1" cy="452.2" r="3.5" fill="#b2b2b2"/><circle cx="849.1" cy="452.2" r="1.5" fill="#f7952f"/>
<circle cx="1000.9" cy="452.2" r="3.5" fill="#b2b2b2"/><circle cx="1000.9" cy="452.2" r="1.5" fill="#f7952f"/>
<circle cx="818.5" cy="493.2" r="3.5" fill="#b2b2b2"/><circle cx="818.5" cy="493.2" r="1.5" fill="#f7952f"/>
<circle cx="1031.5" cy="493.2" r="3.5" fill="#b2b2b2"/><circle cx="1031.5" cy="493.2" r="1.5" fill="#f7952f"/>
<circle cx="795.8" cy="534" r="3.5" fill="#b2b2b2"/><circle cx="795.8" cy="534" r="1.5" fill="#f7952f"/>
<circle cx="1054.2" cy="534" r="3.5" fill="#b2b2b2"/><circle cx="1054.2" cy="534" r="1.5" fill="#f7952f"/>
<circle cx="787.3" cy="562.9" r="3.5" fill="#b2b2b2"/><circle cx="787.3" cy="562.9" r="1.5" fill="#f7952f"/>
<circle cx="1062.7" cy="562.9" r="3.5" fill="#b2b2b2"/><circle cx="1062.7" cy="562.9" r="1.5" fill="#f7952f"/>
<circle cx="822.4" cy="657.3" r="3.5" fill="#b2b2b2"/><circle cx="822.4" cy="657.3" r="1.5" fill="#f7952f"/>
<circle cx="1027.6" cy="657.3" r="3.5" fill="#b2b2b2"/><circle cx="1027.6" cy="657.3" r="1.5" fill="#f7952f"/>
<circle cx="838.6" cy="698" r="3.5" fill="#b2b2b2"/><circle cx="838.6" cy="698" r="1.5" fill="#f7952f"/>
<circle cx="1011.4" cy="698" r="3.5" fill="#b2b2b2"/><circle cx="1011.4" cy="698" r="1.5" fill="#f7952f"/>
<circle cx="865.5" cy="739.1" r="3.5" fill="#b2b2b2"/><circle cx="865.5" cy="739.1" r="1.5" fill="#f7952f"/>
<circle cx="984.5" cy="739.1" r="3.5" fill="#b2b2b2"/><circle cx="984.5" cy="739.1" r="1.5" fill="#f7952f"/>
<circle cx="885.9" cy="759.8" r="3.5" fill="#b2b2b2"/><circle cx="885.9" cy="759.8" r="1.5" fill="#f7952f"/>
<circle cx="925" cy="759.8" r="3.5" fill="#b2b2b2"/><circle cx="925" cy="759.8" r="1.5" fill="#f7952f"/>
<circle cx="964.1" cy="759.8" r="3.5" fill="#b2b2b2"/><circle cx="964.1" cy="759.8" r="1.5" fill="#f7952f"/>
<text x="1246" y="595.5" font-size="8" fill="#444" font-family="Liberation Sans">z+</text>
<text x="928.5" y="777.5" font-size="10" fill="#333" font-family="Liberation Sans">y+</text>
</svg>
<div class="t" style="left:858.80px;top:791.54px;font-size:12px;line-height:12px;color:#262626;">x<span style="font-size:11px;position:relative;top:5px;">head</span> <span style="position:relative;top:-2px">(m)</span></div>
<div class="a" style="left:912px;top:791.5px;width:25px;height:20px;background:#ffffff;border:1px solid #b0b0b8;box-sizing:border-box;"></div>
<div class="t" style="left:724.50px;width:400px;text-align:center;top:795.64px;font-size:12px;line-height:12px;color:#9a9a9a;">0</div>
<div class="t" style="left:1128.80px;top:785.12px;font-size:19px;line-height:19px;color:#808080;font-style:italic;">OpenLAB by L-SA</div>
</body></html>
